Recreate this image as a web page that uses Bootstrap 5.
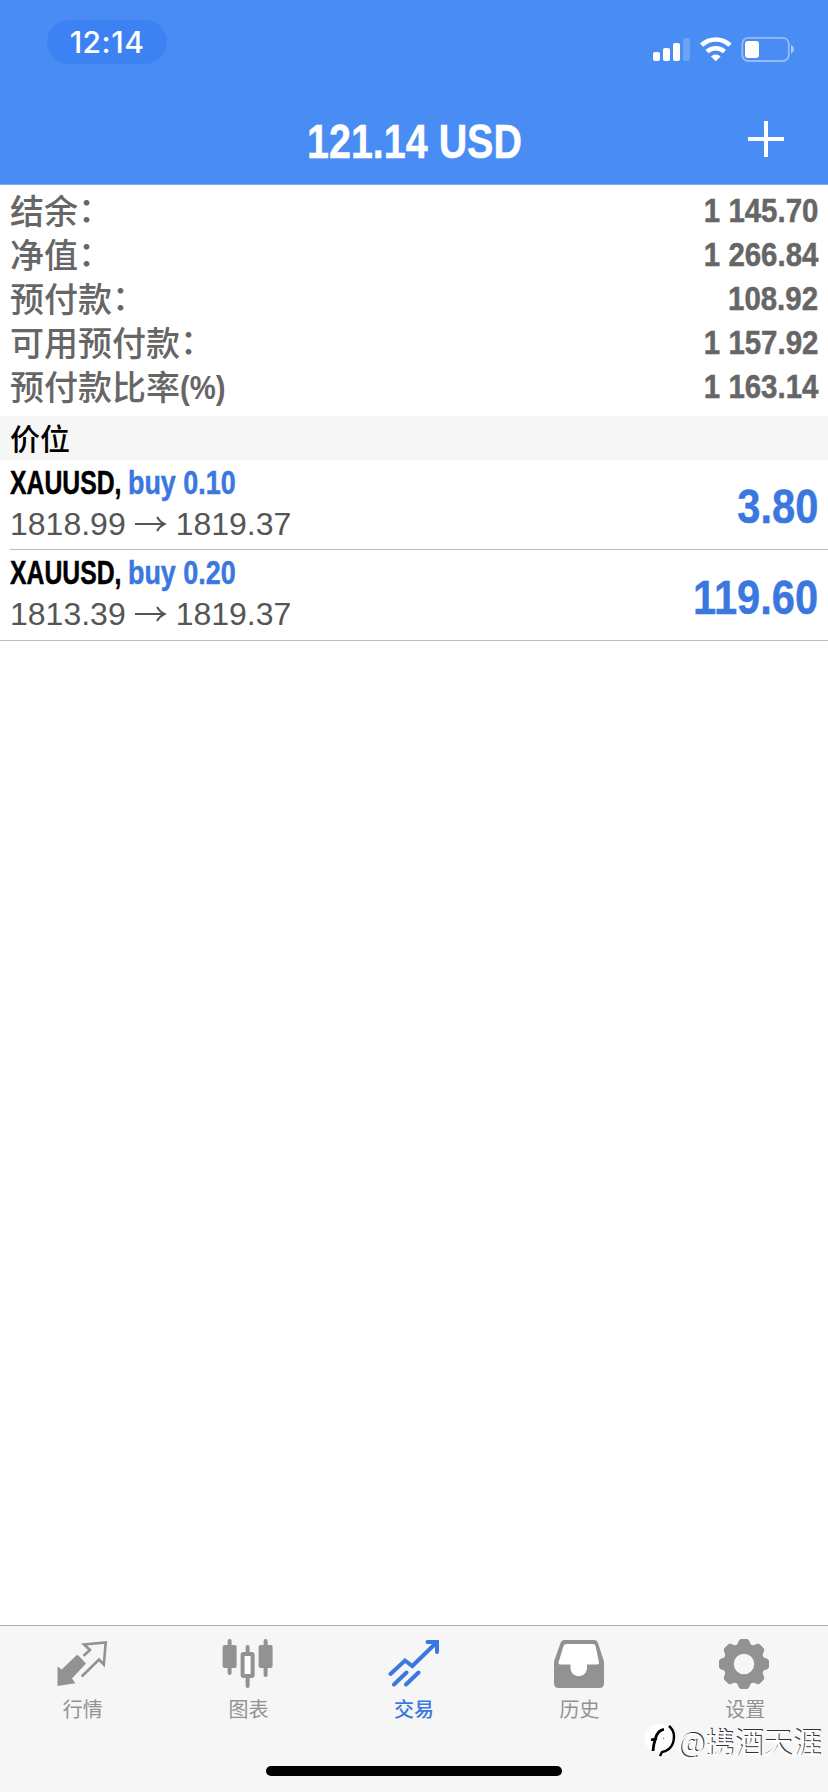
<!DOCTYPE html>
<html lang="zh-CN">
<head>
<meta charset="utf-8">
<meta name="viewport" content="width=device-width, initial-scale=1">
<title>交易</title>
<link href="https://cdn.jsdelivr.net/npm/bootstrap@5.3.0/dist/css/bootstrap.min.css" rel="stylesheet">
<style>
  :root { --brand: #488cf4; --link: #3a78e0; }
  html, body { height: 100%; }
  body { font-family: "Liberation Sans", "Noto Sans CJK SC", sans-serif; background: #fff; color: #000; overflow: hidden; }
  .app { height: 1792px; width: 828px; }
  .topbar { height: 185px; background: var(--brand); border-bottom: 1px solid #8aa5d8; color: #fff; }
  .statusbar { height: 96px; padding: 20px 34px 0 47px; }
  .clock { width: 120px; height: 44px; background: #3d82f3; font: 500 30px/45px Inter, sans-serif; letter-spacing: .5px; }
  .status-icons { margin-top: 16px; }
  .titlebar { height: 88px; }
  .add-icon { right: 44px; top: 25px; }
  /* condensed bold face, squeezed horizontally from the regular width */
  .cond { display: inline-block; white-space: pre; font-weight: 700; line-height: 44px; transform-origin: 0 50%; -webkit-text-stroke: .5px currentColor; }
  .cond-end { transform-origin: 100% 50%; }
  .title-text { font-size: 49px; transform: scaleX(.805); transform-origin: 50% 50%; margin-bottom: 0; padding-top: 2px; }
  .summary { padding: 3px 10px 0 10px; height: 231px; color: #666; }
  .summary-row { height: 44px; line-height: 44px; font-size: 34px; }
  .summary-row dt { font-family: "Noto Sans CJK SC", sans-serif; font-weight: 500; line-height: 43px; }
  .summary-row .colon { display: inline-block; line-height: 1; transform: translateY(-2px); }
  .summary-row .paren { display: inline-block; line-height: 1; font-family: "Liberation Sans", sans-serif; font-weight: 700; font-size: 34px; transform: translateY(-1px) scaleX(.86); transform-origin: 0 50%; }
  .summary-row dd { margin: 0; }
  .summary-row .cond { transform: scaleX(.865); }
  .section-head { height: 44px; background: #f6f6f7; padding-left: 10px; font: 500 30px/43px "Noto Sans CJK SC", sans-serif; }
  .position { height: 90px; margin-left: 10px; padding-right: 10px; border-bottom: 1px solid #bdbdc0; }
  .position:last-child { margin-left: 0; padding-left: 10px; height: 91px; }
  .symbol { width: 118px; font-size: 33px; transform: scaleX(.75); }
  .side { font-size: 33px; transform: scaleX(.815); color: var(--link); }
  .line-one { height: 44px; padding-top: 1px; }
  .line-two { height: 40px; line-height: 40px; font-size: 32px; color: #555; }
  .profit { font-size: 49px; color: var(--link); transform: scaleX(.85); padding-top: 3px; }
  .tabs { height: 167px; background: #f6f6f7; border-top: 1px solid #adadaf; color: #929292; }
  .tab { flex: 1 1 0; padding-top: 11px; font: 400 20px/28px "Noto Sans CJK SC", sans-serif; color: inherit; text-decoration: none; }
  .tab svg { display: block; margin-bottom: 6px; }
  .tab.active { color: var(--link); font-weight: 500; }
  .home-bar { bottom: 16px; left: 266px; width: 296px; height: 10px; background: #000; }
  .credit { right: 7px; bottom: 31px; height: 40px; color: #fff; font: 400 29px/38px "Noto Sans CJK SC", sans-serif; text-shadow: 1px -1px 0 #333, 0 0 2px #fff; }
</style>
</head>
<body>
<div class="app d-flex flex-column position-relative">
  <header class="topbar flex-shrink-0">
    <div class="statusbar d-flex justify-content-between align-items-start">
      <div class="clock rounded-pill text-center">12:14</div>
      <svg class="status-icons" width="144" height="30" viewBox="0 0 144 30" fill="#fff">
        <rect x="3" y="16" width="7" height="9" rx="2"/><rect x="13" y="12" width="7" height="13" rx="2"/><rect x="23" y="7" width="7" height="18" rx="2"/><rect x="33" y="2" width="7" height="23" rx="2" opacity=".2"/>
        <g fill="none" stroke="#fff" stroke-width="4.600"><path d="M51.500 9.200a20.500 20.500 0 0 1 28.500 0"/><path d="M57 15.600a13 13 0 0 1 17.500 0"/></g>
        <path d="M65.700 25.200l-4.800-4.700a7.200 7.200 0 0 1 9.700 0z"/>
        <rect x="92.300" y="1.800" width="46.500" height="23.200" rx="6" fill="none" stroke="#fff" stroke-width="1.800" opacity=".42"/>
        <path d="M141 9c4 1.500 4 7 0 8.500z" opacity=".5"/><rect x="95" y="5" width="14" height="17" rx="3"/>
      </svg>
    </div>
    <div class="titlebar d-flex align-items-center position-relative">
      <h1 class="cond title-text mx-auto">121.14 USD</h1>
      <svg class="add-icon position-absolute" width="36" height="36" viewBox="0 0 36 36" stroke="#fff" stroke-width="4"><path d="M0 18h36M18 0v36"/></svg>
    </div>
  </header>

  <main class="flex-grow-1">
    <dl class="summary mb-0">
      <div class="summary-row d-flex justify-content-between"><dt>结余<span class="colon">：</span></dt><dd class="cond cond-end">1 145.70</dd></div>
      <div class="summary-row d-flex justify-content-between"><dt>净值<span class="colon">：</span></dt><dd class="cond cond-end">1 266.84</dd></div>
      <div class="summary-row d-flex justify-content-between"><dt>预付款<span class="colon">：</span></dt><dd class="cond cond-end">108.92</dd></div>
      <div class="summary-row d-flex justify-content-between"><dt>可用预付款<span class="colon">：</span></dt><dd class="cond cond-end">1 157.92</dd></div>
      <div class="summary-row d-flex justify-content-between"><dt>预付款比率<span class="paren">(%)</span></dt><dd class="cond cond-end">1 163.14</dd></div>
    </dl>
    <div class="section-head">价位</div>
    <div class="positions">
      <div class="position d-flex justify-content-between align-items-center">
        <div class="h-100">
          <div class="line-one d-flex"><span class="cond symbol">XAUUSD,</span><span class="cond side">buy 0.10</span></div>
          <div class="line-two d-flex align-items-center"><span>1818.99</span><svg class="mx-2" width="34" height="20" viewBox="0 0 34 20" fill="none" stroke="#555" stroke-width="2"><path d="M1 10h29M23 3q3 5 7.500 7q-4.500 2-7.500 7"/></svg><span>1819.37</span></div>
        </div>
        <span class="cond cond-end profit">3.80</span>
      </div>
      <div class="position d-flex justify-content-between align-items-center">
        <div class="h-100">
          <div class="line-one d-flex"><span class="cond symbol">XAUUSD,</span><span class="cond side">buy 0.20</span></div>
          <div class="line-two d-flex align-items-center"><span>1813.39</span><svg class="mx-2" width="34" height="20" viewBox="0 0 34 20" fill="none" stroke="#555" stroke-width="2"><path d="M1 10h29M23 3q3 5 7.500 7q-4.500 2-7.500 7"/></svg><span>1819.37</span></div>
        </div>
        <span class="cond cond-end profit">119.60</span>
      </div>
    </div>
  </main>

  <nav class="tabs d-flex flex-shrink-0">
    <a class="tab d-flex flex-column align-items-center" href="#">
      <svg width="52" height="52" viewBox="0 0 52 52" fill="currentColor"><path d="M.5 29.500l4.200 3L19 18.700q1.300-1.200 2.600 0L29 26.500l-14 15 3.300 4.700L.5 49z"/><path d="M24.700 39.500L42 22.500l4.800 5L48.700 5.500 27 7.500l6 5.500-6.500 5.700" fill="none" stroke="currentColor" stroke-width="2.600"/></svg>行情</a>
    <a class="tab d-flex flex-column align-items-center" href="#">
      <svg width="52" height="52" viewBox="0 0 52 52" fill="currentColor"><rect x=".6" y="8" width="14" height="23" rx="2"/><rect x="36.600" y="8" width="14" height="23" rx="2"/><path d="M7.600 4v32M43.600 4v34M25.600 10v8M25.600 40v9" stroke="currentColor" stroke-width="4" stroke-linecap="round"/><rect x="20.600" y="17" width="10" height="22" rx="1" fill="#fff" stroke="currentColor" stroke-width="4"/></svg>图表</a>
    <a class="tab active d-flex flex-column align-items-center" href="#">
      <svg width="52" height="52" viewBox="0 0 52 52" fill="none" stroke="currentColor" stroke-width="4" stroke-linecap="round"><path d="M2.500 37L17 23.500l7.300 5.500L48 6M39.500 5h9.500v10M6 47.500l12.500-12M18 47.500l12.500-12"/></svg>交易</a>
    <a class="tab d-flex flex-column align-items-center" href="#">
      <svg width="52" height="52" viewBox="0 0 52 52"><path d="M10.500 3H40q3 0 4 3l5.500 17q.5 1.500.5 3v20q0 5-4.500 5h-41Q0 51 0 46V26q0-1.500.5-3L6.500 6q1-3 4-3z" fill="currentColor"/><path d="M12 7h27q2 0 2.600 2L45 25.500q.3 2-1.500 2H33v3c0 11.500-16.500 11.500-16.500 0v-3H6q-1.800 0-1.500-2L9.500 9q.6-2 2.500-2z" fill="#fff"/></svg>历史</a>
    <a class="tab d-flex flex-column align-items-center" href="#">
      <svg width="52" height="52" viewBox="-26 -27 52 52" fill="currentColor">
        <defs><path id="cog" d="M-10-16Q-6.500-18-6-21Q-5-25-2.500-25h5Q5-25 6-21Q6.500-18 10-16z"/></defs>
        <g transform="translate(-1 0)"><circle r="15.500" fill="none" stroke="currentColor" stroke-width="10.500"/><use href="#cog"/><use href="#cog" transform="rotate(45)"/><use href="#cog" transform="rotate(90)"/><use href="#cog" transform="rotate(135)"/><use href="#cog" transform="rotate(180)"/><use href="#cog" transform="rotate(225)"/><use href="#cog" transform="rotate(270)"/><use href="#cog" transform="rotate(315)"/></g>
      </svg>设置</a>
  </nav>
  <div class="credit position-absolute d-flex align-items-center">
    <svg width="36" height="40" viewBox="0 0 36 40" fill="none"><path d="M16 3a14 14 0 0 1 14 14c0 8-6 14-13 14S3 27 3 17 9 3 16 3z" fill="#fff"/><path d="M11 30Q11.500 23 13.700 16.700Q16 9 22 8.300M9 19l6-1.500" stroke="#000" stroke-width="2.800"/><path d="M27 5Q32 9 32 15.500Q32 23 27.500 27.500Q24 30.500 20 31l-2 4" stroke="#000" stroke-width="2.400"/><circle cx="21.500" cy="17.500" r=".8" fill="#888"/></svg>
    <span>@携酒天涯</span>
  </div>
  <div class="home-bar position-absolute rounded-pill"></div>
</div>
<script src="https://cdn.jsdelivr.net/npm/bootstrap@5.3.0/dist/js/bootstrap.bundle.min.js"></script>
</body>
</html>
